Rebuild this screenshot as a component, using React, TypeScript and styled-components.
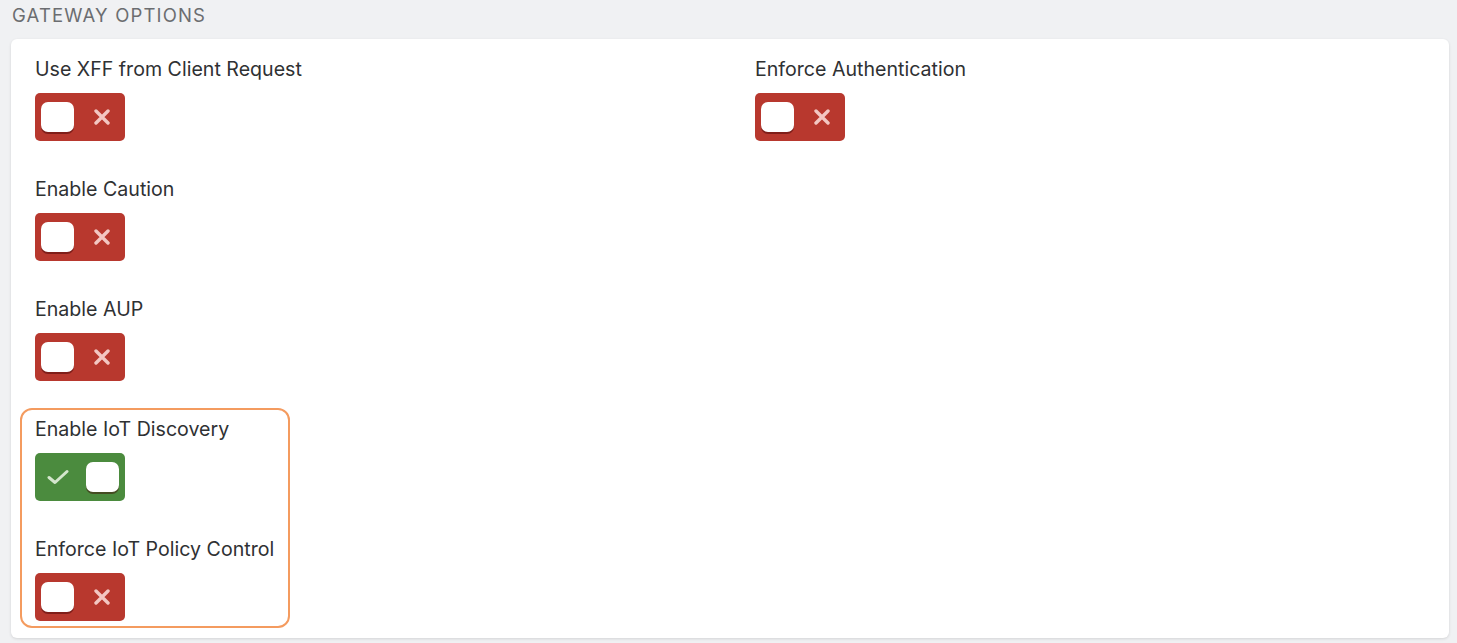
import styled, { createGlobalStyle } from "styled-components";

const GlobalStyle = createGlobalStyle`
  html, body {
    margin: 0;
    padding: 0;
    background-color: #f0f1f3;
    font-family: Inter, "Noto Sans", Arial, sans-serif;
  }
`;

const Page = styled.div`
  padding: 4px 8px 5px 11px;
`;

const Heading = styled.h2`
  margin: 0 0 12px 1px;
  height: 23px;
  font-size: 18.5px;
  font-weight: 400;
  line-height: 23px;
  letter-spacing: 1.15px;
  color: #6b6d70;
  text-transform: uppercase;
`;

const Card = styled.div`
  display: grid;
  grid-template-columns: 1fr 1fr;
  column-gap: 50px;
  align-items: start;
  padding: 18px 24px 17px 24px;
  background-color: #fff;
  border-radius: 6px;
  box-shadow: 0 1px 3px rgba(0, 0, 0, 0.12);
`;

const Column = styled.div`
  display: flex;
  flex-direction: column;
  gap: 36px;
`;

const Group = styled.div`
  position: relative;
  display: flex;
  flex-direction: column;
  gap: 36px;

  &::after {
    content: "";
    position: absolute;
    top: -9px;
    left: -15px;
    width: 270px;
    bottom: -7px;
    border: 2px solid #f49b5f;
    border-radius: 12px;
    box-sizing: border-box;
    pointer-events: none;
  }
`;

const Field = styled.div`
  display: flex;
  flex-direction: column;
  align-items: flex-start;
  gap: 12px;
`;

const Label = styled.div`
  font-size: 19.6px;
  line-height: 24px;
  color: #2f3133;
`;

const Toggle = styled.button<{ $on: boolean }>`
  display: flex;
  flex-direction: ${(p) => (p.$on ? "row-reverse" : "row")};
  align-items: center;
  justify-content: space-between;
  width: 90px;
  height: 48px;
  padding: 0 6px;
  border: none;
  border-radius: 5px;
  background-color: ${(p) => (p.$on ? "#4b8b3e" : "#b8382e")};
  cursor: pointer;
`;

const Knob = styled.span`
  width: 33px;
  height: 30px;
  margin-top: -1px;
  border-radius: 7px;
  background-color: #fff;
  box-shadow: 0 2px 0 rgba(60, 0, 0, 0.45);
`;

const IconSlot = styled.span`
  display: flex;
  align-items: center;
  justify-content: center;
  margin-right: 8px;
`;

const CheckSlot = styled(IconSlot)`
  margin-right: 0;
  margin-left: 6px;
`;

function Switch({ on }: { on: boolean }) {
  return (
    <Toggle $on={on} type="button">
      <Knob />
      {on ? (
        <CheckSlot>
          <svg width="22" height="16" viewBox="0 0 22 16">
            <path
              d="M2 8.5 L8 13.5 L20 2.5"
              fill="none"
              stroke="#d4e6cd"
              strokeWidth="3"
              strokeLinecap="round"
              strokeLinejoin="round"
            />
          </svg>
        </CheckSlot>
      ) : (
        <IconSlot>
          <svg width="18" height="16" viewBox="0 0 18 16">
            <path
              d="M3 2 L15 14 M15 2 L3 14"
              fill="none"
              stroke="#f3c7c2"
              strokeWidth="3.4"
              strokeLinecap="round"
            />
          </svg>
        </IconSlot>
      )}
    </Toggle>
  );
}

function Option({ label, on = false }: { label: string; on?: boolean }) {
  return (
    <Field>
      <Label>{label}</Label>
      <Switch on={on} />
    </Field>
  );
}

export default function App() {
  return (
    <Page>
      <GlobalStyle />
      <Heading>Gateway Options</Heading>
      <Card>
        <Column>
          <Option label="Use XFF from Client Request" />
          <Option label="Enable Caution" />
          <Option label="Enable AUP" />
          <Group>
            <Option label="Enable IoT Discovery" on />
            <Option label="Enforce IoT Policy Control" />
          </Group>
        </Column>
        <Column>
          <Option label="Enforce Authentication" />
        </Column>
      </Card>
    </Page>
  );
}
